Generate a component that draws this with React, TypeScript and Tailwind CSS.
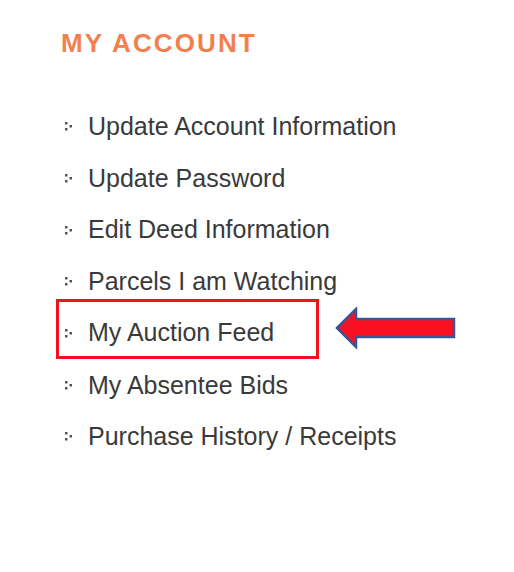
import React from 'react'

const links = [
  'Update Account Information',
  'Update Password',
  'Edit Deed Information',
  'Parcels I am Watching',
  'My Auction Feed',
  'My Absentee Bids',
  'Purchase History / Receipts',
]

function Bullet() {
  return (
    <svg width="8" height="9" viewBox="0 0 8 9" className="shrink-0 fill-[#555]">
      <rect x="0" y="0" width="2.5" height="2.5" />
      <rect x="0" y="6" width="2.5" height="2.5" />
      <rect x="4.5" y="3" width="2.5" height="2.5" />
    </svg>
  )
}

function Arrow() {
  return (
    <svg width="122" height="42" viewBox="0 0 122 42" className="ml-[16px] -mt-[11px]">
      <polygon
        points="2,21 21,2 21,12 119,12 119,30 21,30 21,40"
        fill="#fa1020"
        stroke="#3b5492"
        strokeWidth="2.5"
        strokeLinejoin="miter"
      />
    </svg>
  )
}

export default function App() {
  return (
    <div className="w-[514px] h-[572px] bg-white font-['Liberation_Sans',Arial,sans-serif]">
      <div className="pl-[61px] pt-[29px]">
        <h2 className="text-[26px] leading-[28px] font-bold tracking-[2.1px] text-[#f2804f]">MY ACCOUNT</h2>
      </div>
      <ul className="mt-[44px] pl-[56px] flex flex-col">
        {links.map((label) => {
          const active = label === 'My Auction Feed'
          return (
            <li key={label} className="flex items-center h-[51.7px]">
              {active ? (
                <div className="flex items-center gap-[15px] pl-[6px] pt-[9px] h-[60px] -mt-[10px] w-[263px] border-[3px] border-[#f4101e]">
                  <Bullet />
                  <span className="text-[25px] text-[#3a3a3a]">{label}</span>
                </div>
              ) : (
                <div className="flex items-center gap-[15px] pl-[9px] h-[57px]">
                  <Bullet />
                  <span className="text-[25px] text-[#3a3a3a]">{label}</span>
                </div>
              )}
              {active && <Arrow />}
            </li>
          )
        })}
      </ul>
    </div>
  )
}
